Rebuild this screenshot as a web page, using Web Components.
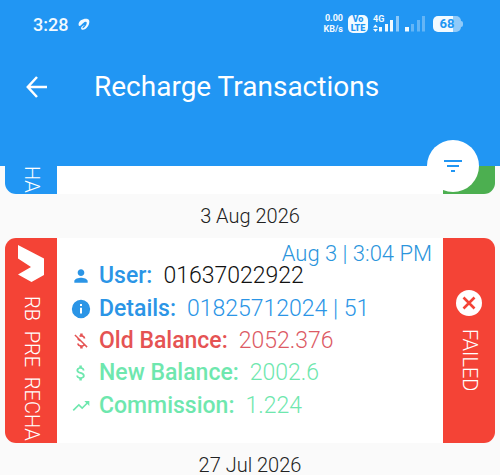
<!DOCTYPE html>
<html lang="en">
<head>
<meta charset="utf-8">
<meta name="viewport" content="width=device-width, initial-scale=1">
<title>Recharge Transactions</title>
<style>
html,body{height:100%}
body{margin:0;background:#fafafa;font-family:Roboto,"Liberation Sans",sans-serif;font-weight:300;overflow:hidden}
</style>
</head>
<body>
<recharge-app></recharge-app>
<script>
const define = (name, html, setup) => customElements.define(name, class extends HTMLElement {
  constructor() {
    super();
    const t = document.createElement('template');
    t.innerHTML = html;
    this.attachShadow({mode: 'open'}).append(t.content.cloneNode(true));
  }
  connectedCallback() { if (setup) setup(this, this.shadowRoot); }
});

define('status-bar', `
<style>
:host{display:flex;align-items:center;justify-content:space-between;height:48px;padding:0 37px 0 33px;color:#f2faff}
.side{display:flex;align-items:center}
time{font-size:18px;font-weight:500;line-height:24px;margin-right:10px;padding-top:2px}
.rate{font-size:9px;font-weight:700;line-height:11px;text-align:right;margin-right:5px}
.lte{display:grid;background:#f2faff;color:#2196f3;border-radius:5px;width:20px;font-size:9px;font-weight:900;line-height:9px;text-align:center;margin-right:5px}
.net{display:grid;justify-items:start;font-size:9px;font-weight:700;line-height:8px;width:28px;margin-right:4px}
.net span,.net svg{grid-area:1/1}
svg{display:block}
.battery{display:flex;align-items:center}
.level{background:linear-gradient(90deg,#f2faff 72%,#90caf9 72%);color:#2196f3;border-radius:5px;width:28px;height:16px;font-size:13px;font-weight:700;line-height:16px;text-align:center}
.tip{width:2px;height:6px;background:#90caf9;border-radius:0 2px 2px 0}
</style>
<div class="side"><time>3:28</time>
<svg width="12" height="13" viewBox="0 0 12 13"><path d="M.6 7C.2 3 4.500.8 8 .8c3.200 0 3.900 2.200 3 5.200-1 3-3.600 5.700-6 5.700-2.200 0-2.400-2.100-1-3.300.8-.7 2-1.100 3-1.300-1.400 1-2.700 2-2.500 2.800.3.900 2.500-.7 3.500-2.600.9-1.700 1.200-3.300 0-3.600C6.500 3.300 4.600 5.500 3 7.200 2 8.300.8 8.300.6 7Z" fill="currentColor"/></svg></div>
<div class="side">
<div class="rate">0.00<br>KB/s</div><span class="lte"><span>Vo</span><span>LTE</span></span>
<div class="net"><span>4G</span><svg width="28" height="18" viewBox="0 0 28 18"><path d="M0 12.500l2.500-3 2.500 3zM0 14h5l-2.500 3z" fill="currentColor"/><path d="M6 12h3v4.500H6zM12 9h3v7.500h-3zM17 5h3v11.500h-3z" fill="currentColor"/><path d="M23 1h3v15.500h-3z" fill="#90caf9"/></svg></div>
<svg width="28" height="18" viewBox="0 0 28 18"><path d="M0 12h4v4.500H0z" fill="currentColor"/><path d="M6 9h3v7.500H6zM12 5h3v11.500h-3zM17 1h3v15.500h-3z" fill="#64b5f6"/></svg>
<div class="battery"><span class="level">68</span><span class="tip"></span></div>
</div>`);

define('app-header', `
<style>
:host{display:flex;flex-direction:column;position:relative;z-index:1;background:#2196f3;color:#fff;height:166px;flex:none}
.bar{display:flex;align-items:center;gap:45px;padding:18px 24px}
h1{margin:0;font-size:28px;line-height:42px;font-weight:400}
button{border:0;padding:0;background:none;color:inherit;display:grid;place-items:center}
.back{width:25px;height:42px}
.filter{position:absolute;right:21px;bottom:-26px;width:52px;height:52px;border-radius:50%;background:#fff;color:#2196f3}
</style>
<status-bar></status-bar>
<div class="bar"><button class="back" aria-label="Back"><svg width="22" height="22" viewBox="0 0 22 22" fill="none" stroke="currentColor" stroke-width="2.500"><path d="M11 1 1.800 11 11 21M2 11h19"/></svg></button><h1><slot></slot></h1></div>
<button class="filter" aria-label="Filter"><svg width="18" height="12" viewBox="0 0 18 12" fill="currentColor"><path d="M0 0h18v2H0zM3 5h12v2H3zM7 10h4v2H7z"/></svg></button>`);

define('date-heading', `
<style>:host{display:block;text-align:center;font-size:20px;line-height:44px;color:#222;flex:none}</style><slot></slot>`);

define('side-strip', `
<style>
:host{display:flex;flex-direction:column;align-items:center;width:52px;contain:size;flex:none;color:#fff;overflow:hidden;box-sizing:border-box}
.label{writing-mode:vertical-rl;white-space:pre;font-size:20px;line-height:24px;flex:none;padding-left:2px}
</style><slot name="icon"></slot><span class="label"><slot></slot></span>`);

define('detail-row', `
<style>
:host{display:flex;align-items:center;color:var(--tone);white-space:nowrap}
svg{width:20px;height:20px;fill:currentColor;margin-right:8px;flex:none}
b{font-weight:500;margin-right:11px}
b,span{font-size:23px;line-height:28px}
span{color:var(--value,var(--tone))}
</style><svg viewBox="0 0 24 24"><path></path></svg><b></b><span><slot></slot></span>`, (el, root) => {
  const icons = {
    user: 'M12 12c2.210 0 4-1.790 4-4s-1.790-4-4-4-4 1.790-4 4 1.790 4 4 4zm0 2c-2.670 0-8 1.340-8 4v2h16v-2c0-2.660-5.330-4-8-4z',
    info: 'M12 1a11 11 0 1 0 0 22 11 11 0 0 0 0-22zm1.200 16.500h-2.400V10.500h2.400zm0-9h-2.400V6h2.400z',
    off: 'M12.500 6.900c1.780 0 2.440.85 2.500 2.100h2.210c-.07-1.720-1.120-3.300-3.210-3.810V3h-3v2.160c-.53.120-1.030.3-1.480.540l1.470 1.470c.41-.17.910-.27 1.510-.27zM5.330 4.060L4.060 5.330 7.500 8.770c0 2.080 1.560 3.210 3.910 3.910l3.510 3.510c-.34.480-1.050.910-2.420.910-2.060 0-2.870-.92-2.980-2.100h-2.200c.12 2.190 1.760 3.420 3.680 3.830V21h3v-2.150c.96-.18 1.820-.55 2.450-1.120l2.220 2.220 1.270-1.270L5.330 4.060z',
    money: 'M11.800 10.900c-2.270-.59-3-1.200-3-2.150 0-1.090 1.010-1.850 2.700-1.850 1.780 0 2.440.85 2.500 2.100h2.210c-.07-1.720-1.120-3.300-3.210-3.810V3h-3v2.160c-1.940.420-3.500 1.680-3.500 3.610 0 2.310 1.910 3.460 4.700 4.130 2.500.6 3 1.480 3 2.410 0 .69-.49 1.790-2.700 1.790-2.060 0-2.870-.92-2.980-2.100h-2.200c.12 2.190 1.760 3.420 3.680 3.830V21h3v-2.150c1.950-.37 3.500-1.500 3.500-3.550 0-2.840-2.430-3.810-4.700-4.400z',
    trend: 'M16 6l2.290 2.290-4.880 4.880-4-4L2 16.590 3.410 18l6-6 4 4 6.300-6.290L22 12V6z'
  };
  root.querySelector('path').setAttribute('d', icons[el.getAttribute('icon')]);
  root.querySelector('b').textContent = el.getAttribute('label');
});

define('transaction-card', `
<style>
:host{display:flex;background:#fff;border-radius:11px;overflow:hidden;margin:0 5px;flex:none}
.body{flex:1;min-width:0;display:flex;flex-direction:column;box-sizing:border-box}
</style><slot name="start"></slot><div class="body"><slot></slot></div><slot name="end"></slot>`);

define('recharge-app', `
<style>
:host{display:flex;flex-direction:column;min-height:100%}
.red{background:#f44336}.blue{background:#2196f3}.green{background:#4caf50}
.peek{height:28px;border-top-left-radius:0;border-top-right-radius:0}
.main{min-height:205px}
.brand{padding-top:6px}
.brand svg{margin-bottom:13px}
.state{justify-content:center}
.state svg{margin-bottom:13px}
.when{text-align:right;padding:10px 11px 0 0;font-size:22px;line-height:12px;color:#2b95dc}
.rows{flex:1;display:grid;grid-auto-rows:1fr;padding:0 13px 21px 14px}
svg{display:block;flex:none}
</style>
<app-header>Recharge Transactions</app-header>
<transaction-card class="peek"><side-strip slot="start" class="blue">HA</side-strip><side-strip slot="end" class="green"></side-strip></transaction-card>
<date-heading>3 Aug 2026</date-heading>
<transaction-card class="main">
<side-strip slot="start" class="red brand"><svg slot="icon" width="28" height="39" viewBox="0 0 28 39"><path d="M1 1 27 14.500V31L14.500 38 1 30.500 14 23 1 14.500Z" fill="#fff"/></svg>RB  PRE  RECHA</side-strip>
<div class="when">Aug 3 | 3:04 PM</div>
<div class="rows">
<detail-row icon="user" label="User:" style="--tone:#2b95e6;--value:#111">01637022922</detail-row>
<detail-row icon="info" label="Details:" style="--tone:#2b95e6">01825712024 | 51</detail-row>
<detail-row icon="off" label="Old Balance:" style="--tone:#e55353;--value:#dc5a64">2052.376</detail-row>
<detail-row icon="money" label="New Balance:" style="--tone:#6ee7ae">2002.6</detail-row>
<detail-row icon="trend" label="Commission:" style="--tone:#6ee7ae">1.224</detail-row>
</div>
<side-strip slot="end" class="red state"><svg slot="icon" width="26" height="26" viewBox="0 0 26 26"><circle cx="13" cy="13" r="13" fill="#fff"/><path d="m7.500 7.500 11 11m0-11-11 11" stroke="#f44336" stroke-width="2.600"/></svg>FAILED</side-strip>
</transaction-card>
<date-heading>27 Jul 2026</date-heading>`);
</script>
</body>
</html>
